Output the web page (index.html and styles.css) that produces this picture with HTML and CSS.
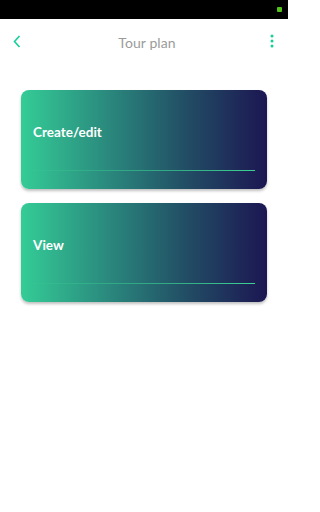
FILE: index.html
```html
<!DOCTYPE html>
<html>
<head>
<meta charset="utf-8">
<meta name="viewport" content="width=device-width, initial-scale=1">
<link rel="stylesheet" href="styles.css">
</head>
<body>
<div class="status"><span class="battery"></span></div>
<header class="bar">
  <svg class="back" width="8" height="13" viewBox="0 0 8 13"><path d="M6.5 1 L1.5 6.5 L6.5 12" fill="none" stroke="#16cf98" stroke-width="1.6"/></svg>
  <div class="title">Tour plan</div>
  <svg class="more" width="4" height="14" viewBox="0 0 4 14"><circle cx="2" cy="2" r="1.5" fill="#16cf98"/><circle cx="2" cy="7" r="1.5" fill="#16cf98"/><circle cx="2" cy="12" r="1.5" fill="#16cf98"/></svg>
</header>
<main class="list">
  <div class="card"><div class="label">Create/edit</div><div class="rule"></div></div>
  <div class="card"><div class="label">View</div><div class="rule"></div></div>
</main>
</body>
</html>
```
FILE: styles.css
```css
html, body { margin: 0; padding: 0; background: #fff; }
body { max-width: 288px; height: 512px; font-family: Lato, "Open Sans", sans-serif; overflow: hidden; }
.status { height: 19px; background: #000; display: flex; justify-content: flex-end; align-items: center; padding-right: 6px; }
.battery { width: 5px; height: 5px; background: #52c41a; border-radius: 1px; margin-top: -1px; }
.bar { height: 46px; display: flex; align-items: center; justify-content: space-between; padding: 0 14px 0 13px; }
.back { display: block; margin-top: -1px; }
.more { display: block; margin-top: -2px; }
.title { font-size: 14px; color: #9b9b9b; letter-spacing: 0.1px; margin-left: 3px; }
.list { display: flex; flex-direction: column; gap: 14px; padding: 25px 21px 0; }
.card { height: 99px; border-radius: 8px; background: linear-gradient(90deg, #34cc96 0%, #29807a 40%, #225166 65%, #1c1652 100%); box-shadow: 0 2px 3px rgba(0,0,0,0.25); padding: 0 12px; box-sizing: border-box; display: flex; flex-direction: column; }
.label { color: #fff; font-weight: 700; font-size: 13.5px; line-height: 16px; padding-top: 34px; }
.rule { height: 1px; margin-top: 30px; background: linear-gradient(90deg, rgba(60,210,145,0.15), #3ad392); }
```
